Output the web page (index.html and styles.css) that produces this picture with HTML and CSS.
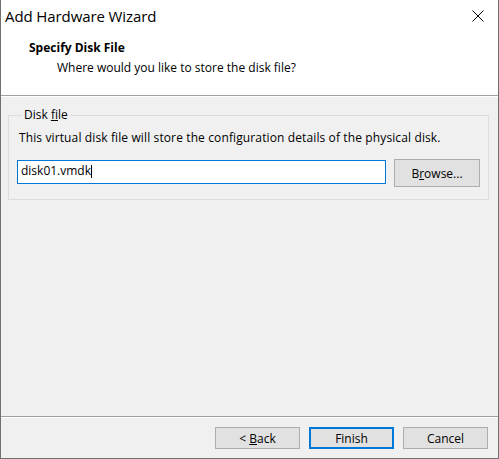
FILE: index.html
```html
<!DOCTYPE html>
<html>
<head>
<meta charset="utf-8">
<link rel="stylesheet" href="styles.css">
</head>
<body>
<div class="window">
  <div class="titlebar">
    <span class="title">Add Hardware Wizard</span>
    <svg class="close" width="12" height="12" viewBox="0 0 12 12"><path d="M0.5 0.5L11.5 11.5M11.5 0.5L0.5 11.5" stroke="#000" stroke-width="1" fill="none"/></svg>
  </div>
  <div class="header">
    <div class="h-title">Specify Disk File</div>
    <div class="h-sub">Where would you like to store the disk file?</div>
  </div>
  <div class="content">
    <fieldset class="group">
      <legend>Disk <u>f</u>ile</legend>
      <p class="desc">This virtual disk file will store the configuration details of the physical disk.</p>
      <div class="row">
        <div class="input">disk01.vmdk<span class="caret"></span></div>
        <button class="btn browse">B<u>r</u>owse...</button>
      </div>
    </fieldset>
  </div>
  <div class="footer">
    <button class="btn">&lt; <u>B</u>ack</button>
    <button class="btn default">Finish</button>
    <button class="btn">Cancel</button>
  </div>
</div>
</body>
</html>
```
FILE: styles.css
```css
* { box-sizing: border-box; }
html, body { margin: 0; padding: 0; background: #f0f0f0; }
body { font-family: "Open Sans", "Noto Sans", sans-serif; font-size: 12px; color: #000; }

.window {
  width: 499px;
  height: 459px;
  display: flex;
  flex-direction: column;
  background: #f0f0f0;
  border-left: 1px solid #707070;
  border-right: 1px solid #707070;
  border-bottom: 1px solid #707070;
}

.titlebar {
  height: 31px;
  background: #fff;
  display: flex;
  align-items: center;
  padding-left: 4px;
  padding-right: 14px;
}
.title { font-size: 15px; line-height: 31px; flex: 1; padding-top: 1px; letter-spacing: -0.1px; }
.close { display: block; }

.header {
  height: 65px;
  background: #fff;
  border-bottom: 1px solid #a0a0a0;
  box-shadow: 0 1px 0 #fff;
  padding: 7px 0 0 28px;
}
.h-title { font-weight: bold; line-height: 20px; }
.h-sub { line-height: 20px; padding-left: 28px; }

.content {
  flex: 1;
  padding: 11px 9px 0 7px;
}

.group {
  margin: 0;
  padding: 0 8px 12px 8px;
  border: 1px solid #dcdcdc;
  min-width: 0;
}
.group legend {
  margin-left: 5px;
  padding: 0 2px 2px 2px;
  line-height: 15px;
}
.desc {
  margin: 6px 0 0 0;
  padding-left: 2px;
  line-height: 16px;
  letter-spacing: 0.12px;
}
.row {
  display: flex;
  align-items: flex-start;
  gap: 8px;
  margin-top: 13px;
}
.input {
  width: 369px;
  height: 24px;
  margin-top: 1px;
  border: 1px solid #0078d7;
  background: #fff;
  padding-left: 3px;
  line-height: 19px;
  white-space: nowrap;
}
.caret {
  display: inline-block;
  width: 1px;
  height: 13px;
  background: #000;
  vertical-align: -3px;
}

.btn {
  font-family: inherit;
  font-size: 12px;
  color: #000;
  background: #e1e1e1;
  border: 1px solid #adadad;
  width: 85px;
  height: 22px;
  padding: 1px 0 0 0;
  margin: 0;
  line-height: 18px;
}
.btn.browse { width: 86px; height: 28px; }
.btn.default { border: 2px solid #0078d7; }

.footer {
  height: 42px;
  border-top: 1px solid #a0a0a0;
  box-shadow: inset 0 1px 0 #fff;
  display: flex;
  justify-content: flex-end;
  gap: 9px;
  padding: 10px 10px 0 0;
}
```
